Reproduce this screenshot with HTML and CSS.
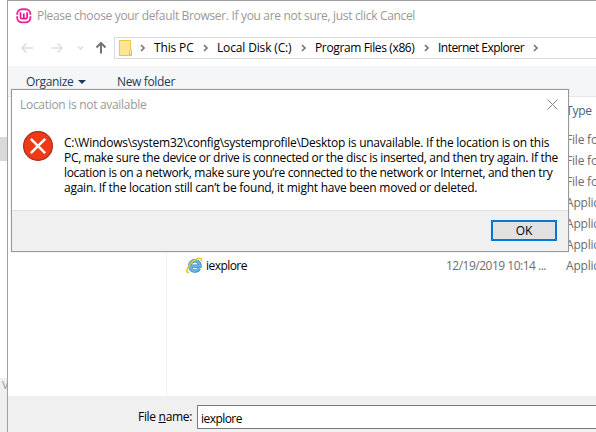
FILE: index.html
```html
<!DOCTYPE html>
<html lang="en">
<head>
<meta charset="utf-8">
<title>Please choose your default Browser</title>
<link rel="stylesheet" href="styles.css">
</head>
<body>
<div class="desktop">
  <div class="behind"><div class="behind-top"></div><div class="behind-scroll"></div><div class="behind-mid"></div><div class="behind-bottom">V</div></div>
  <main class="window">
    <header class="titlebar">
      <svg class="app-icon" width="16" height="16" viewBox="0 0 16 16"><rect x="1.200" y="1.200" width="13.200" height="13.200" rx="4.800" fill="#fff" stroke="#f0269a" stroke-width="1.900"/><path d="M0 7.500h2.500M13.200 7.500H16" stroke="#fff" stroke-width="1.300"/><path d="M4.500 4.200v5q0 1.500 1.600 1.500 1.700 0 1.700-1.500V5.500M7.800 9.200q0 1.500 1.700 1.500 1.600 0 1.600-1.500v-5" fill="none" stroke="#e91391" stroke-width="1.700"/></svg>
      <span class="t-title">Please choose your default Browser. If you are not sure, just click Cancel</span>
    </header>
    <nav class="address-row">
      <svg class="arrows" width="106" height="22" viewBox="0 0 106 22"><g fill="none" stroke="#dedede" stroke-width="1.700"><path d="M25 11H14M18.500 6.500L14 11l4.500 4.500M43 11h11M49.500 6.500L54 11l-4.500 4.500"/><path d="M70 9.500l2.500 2.500L75 9.500"/></g><path d="M93 16.500V6M88.500 10.500L93 6l4.500 4.500" fill="none" stroke="#737373" stroke-width="2"/></svg>
      <div class="address">
        <svg class="folder" width="14" height="16" viewBox="0 0 14 16"><path d="M.5.5h11v9h1v6H.5z" fill="#ffe694" stroke="#eac64d"/><path d="M10.500 15V10.500q1-2 2 0V15z" fill="#fff0b8" stroke="#e8bc3c"/></svg>
        <svg class="chev" width="6" height="8" viewBox="0 0 6 8"><path d="M1 1l3 3-3 3" /></svg>
        <span class="crumb c1">This PC</span>
        <svg class="chev" width="6" height="8" viewBox="0 0 6 8"><path d="M1 1l3 3-3 3" /></svg>
        <span class="crumb c2">Local Disk (C:)</span>
        <svg class="chev" width="6" height="8" viewBox="0 0 6 8"><path d="M1 1l3 3-3 3" /></svg>
        <span class="crumb c3">Program Files (x86)</span>
        <svg class="chev" width="6" height="8" viewBox="0 0 6 8"><path d="M1 1l3 3-3 3" /></svg>
        <span class="crumb c4">Internet Explorer</span>
        <svg class="chev" width="6" height="8" viewBox="0 0 6 8"><path d="M1 1l3 3-3 3" /></svg>
      </div>
    </nav>
    <div class="toolbar"><span class="t-org">Organize</span><svg class="drop" width="8" height="4" viewBox="0 0 8 4"><path d="M0 0h8L4 4z" fill="#1e395b"/></svg><span class="t-new">New folder</span></div>
    <section class="content">
      <div class="tree"></div>
      <div class="files">
        <div class="row head"><span class="type">Type</span></div>
        <div class="row"><span class="type">File folder</span></div>
        <div class="row"><span class="type">File folder</span></div>
        <div class="row"><span class="type">File folder</span></div>
        <div class="row"><span class="type">Application</span></div>
        <div class="row"><span class="type">Application</span></div>
        <div class="row"><span class="type">Application</span></div>
        <div class="row">
          <span class="name"><svg width="17" height="17" viewBox="0 0 17 17"><path d="M13.300 11.300A5.100 5.100 0 1 1 13.900 9.300H5" fill="none" stroke="#3584bd" stroke-width="3.500"/><path d="M13.200 11.300A5.100 5.100 0 1 1 13.900 9.300H5" fill="none" stroke="#62b9e8" stroke-width="2.300"/><path d="M2.800 14.900C-.5 17 .3 10.800 5.700 5.500 10.200 1 16.800-.8 15.300 4.500" fill="none" stroke="#efc322" stroke-width="1.600"/></svg><span class="t-file">iexplore</span></span>
          <span class="date">12/19/2019 10:14 ...</span><span class="type">Application</span>
        </div>
      </div>
    </section>
    <footer class="filebar"><label class="t-label" for="file">File <u>n</u>ame:</label><input id="file" value="iexplore"></footer>
  </main>
  <section class="dialog" role="dialog">
    <div class="dialog-title"><span class="t-loc">Location is not available</span><svg width="11" height="11" viewBox="0 0 11 11"><path d="M.5.500l10 10M10.500.500l-10 10" stroke="#858585" fill="none"/></svg></div>
    <div class="message">
      <svg width="30" height="30" viewBox="0 0 30 30"><circle cx="15" cy="15" r="14.400" fill="#f03a17" stroke="#a92d1c" stroke-width="1.200"/><path d="M7.800 7.800l14.400 14.400M22.200 7.800L7.800 22.200" stroke="#fff" stroke-width="2.500"/></svg>
      <p><span class="l1">C:\Windows\system32\config\systemprofile\Desktop is unavailable. If the location is on this</span><span class="l2">PC, make sure the device or drive is connected or the disc is inserted, and then try again. If the</span><span class="l3">location is on a network, make sure you’re connected to the network or Internet, and then try</span><span class="l4">again. If the location still can’t be found, it might have been moved or deleted.</span></p>
    </div>
    <div class="dialog-actions"><button>OK</button></div>
  </section>
</div>
</body>
</html>
```
FILE: styles.css
```css
* { box-sizing: border-box; }
body { margin: 0; overflow: hidden; font: 12px/16px "Open Sans", "Noto Sans", sans-serif; color: #000; }
span, label { white-space: nowrap; }
svg { display: block; flex: none; }
.desktop { position: relative; width: 596px; height: 432px; display: flex; overflow: hidden; background: #fff; }
.behind { width: 7px; flex: none; overflow: hidden; display: flex; flex-direction: column; }
.behind-top { height: 137px; }
.behind-scroll { height: 24px; background: #d9d9d9; }
.behind-mid { height: 217px; }
.behind-bottom { flex: 1; background: #efefef; color: #999; font-size: 11px; line-height: 14px; padding-left: 2px; }
.window { width: 589px; height: 432px; flex: none; border-left: 1px solid #a0a0a0; border-top: 1px solid #a0a0a0; background: #fff; display: flex; flex-direction: column; overflow: hidden; }
.titlebar { height: 36px; flex: none; display: flex; align-items: flex-start; padding: 6px 0 0 8px; color: #999; }
.t-title { margin: 1px 0 0 5px; letter-spacing: -.33px; }
.app-icon { margin-top: 1px; }
.address-row { height: 29px; flex: none; display: flex; align-items: flex-start; }
.address { flex: 1; height: 22px; border: 1px solid #d9d9d9; border-right: 0; display: flex; align-items: center; padding-left: 4px; }
.chev { fill: none; stroke: #737373; stroke-width: 1.600; }
.folder { margin-right: 7px; }
.crumb { margin: 0 7px 0 8px; flex: none; }
.c1 { width: 42px; letter-spacing: -.15px; }
.c2 { width: 77px; letter-spacing: -.15px; }
.c3 { width: 102px; letter-spacing: -.37px; }
.c4 { width: 88px; letter-spacing: -.53px; }
.toolbar { height: 31px; flex: none; background: #f5f6f7; border-bottom: 1px solid #e5e5e5; display: flex; align-items: center; padding: 1px 0 0 18px; color: #1e395b; }
.t-org { width: 47px; letter-spacing: -.35px; }
.drop { margin: 0 30px 0 5px; }
.t-new { margin-left: 1px; letter-spacing: -.35px; }
.content { height: 299px; flex: none; display: flex; }
.tree { width: 159px; flex: none; border-right: 1px solid #f3f3f3; }
.files { flex: 1; padding-top: 2px; overflow: hidden; }
.row { height: 21px; display: flex; align-items: center; color: #6d6d6d; }
.row.head { height: 30px; padding-bottom: 6px; color: #4c607a; }
.type { margin-left: auto; width: 30px; letter-spacing: -.2px; }
.name { display: flex; align-items: center; color: #000; margin-left: 19px; width: 260px; }
.name svg { margin-top: -1px; }
.t-file { margin-left: 3px; letter-spacing: -.55px; }
.date { letter-spacing: -.5px; }
.filebar { flex: 1; background: #f0f0f0; padding-top: 9px; display: flex; align-items: flex-start; }
.t-label { margin: 4px 0 0 130px; width: 54px; flex: none; letter-spacing: -.3px; }
.filebar input { margin-left: 5px; flex: 1; min-width: 0; height: 24px; border: 1px solid #7a7a7a; border-right: 0; padding: 2px 3px 0; font: inherit; letter-spacing: -.55px; background: #fff; color: #000; outline: 0; }
.dialog { position: absolute; left: 11px; top: 89px; width: 558px; height: 163px; border: 1px solid #999; background: #fff; display: flex; flex-direction: column; box-shadow: 0 0 1px #bbb; }
.dialog-title { height: 37px; flex: none; display: flex; justify-content: space-between; padding: 7px 10px 0 8px; color: #999; }
.t-loc { letter-spacing: -.3px; }
.dialog-title svg { margin-top: 2px; }
.message { flex: 1; display: flex; padding-left: 11px; }
.message svg { margin-top: 4px; }
.message p { margin: 8px 0 0 11px; line-height: 15px; }
.message p span { display: block; }
.l1 { letter-spacing: -.25px; }
.l2 { letter-spacing: -.325px; }
.l3 { letter-spacing: -.345px; }
.l4 { letter-spacing: -.25px; }
.dialog-actions { height: 41px; flex: none; border-top: 1px solid #dfdfdf; background: #f0f0f0; display: flex; justify-content: flex-end; padding: 9px 11px 0 0; }
.dialog-actions button { width: 66px; height: 21px; border: 2px solid #0078d7; background: #e1e1e1; font: inherit; line-height: 16px; padding: 0; color: #000; }
```
